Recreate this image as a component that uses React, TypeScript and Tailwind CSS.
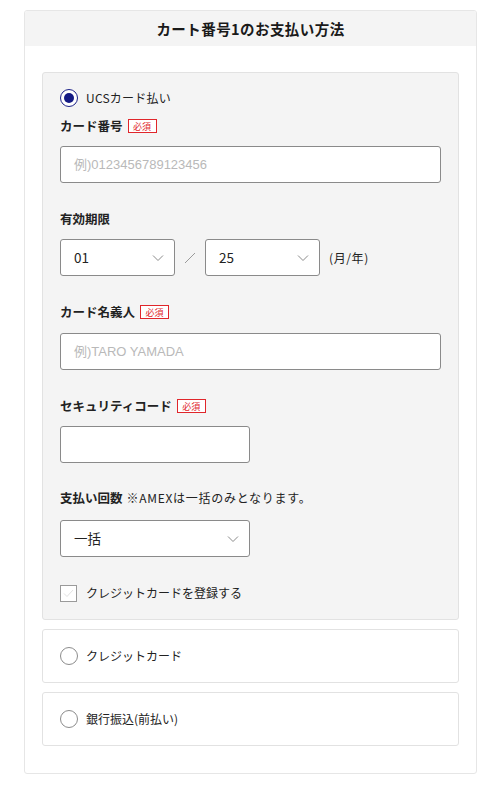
import React from "react";

const jp = { fontFamily: '"Noto Sans CJK JP", "Noto Sans", sans-serif' };

function Badge() {
  return (
    <span className="ml-[5px] inline-flex h-[14px] w-[29px] items-center justify-center border border-[#e0262b] bg-white text-[9px] font-normal leading-none text-[#e0262b]">
      必須
    </span>
  );
}

function Label({ children, required }: { children: React.ReactNode; required?: boolean }) {
  return (
    <div className="flex h-[18px] items-center text-[12.5px] font-bold leading-[18px] text-[#222]">
      <span>{children}</span>
      {required && <Badge />}
    </div>
  );
}

function Chevron() {
  return (
    <svg width="12" height="7" viewBox="0 0 12 7" className="absolute right-[10px] top-1/2 -translate-y-1/2">
      <path d="M1 1 L6 6 L11 1" fill="none" stroke="#8a8a8a" strokeWidth="1" />
    </svg>
  );
}

function Select({ value, width }: { value: string; width: string }) {
  return (
    <div className={`relative flex h-[37px] items-center rounded-[3px] border border-[#8a8a8a] bg-white pl-[13px] text-[13.5px] text-[#222] ${width}`}>
      <span>{value}</span>
      <Chevron />
    </div>
  );
}

function Input({ placeholder, width }: { placeholder?: string; width: string }) {
  return (
    <div className={`flex h-[37px] items-center rounded-[3px] border border-[#8a8a8a] bg-white pl-[13px] ${width}`}>
      {placeholder && (
        <span className="text-[13px] text-[#b9b9b9]" style={{ fontFamily: '"Liberation Sans", "Noto Sans CJK JP", sans-serif' }}>
          {placeholder}
        </span>
      )}
    </div>
  );
}

function Radio({ checked }: { checked?: boolean }) {
  return checked ? (
    <span className="flex h-[18px] w-[18px] items-center justify-center rounded-full border-[1.5px] border-[#1e2388] bg-white">
      <span className="h-[10px] w-[10px] rounded-full bg-[#141a84]" />
    </span>
  ) : (
    <span className="h-[18px] w-[18px] rounded-full border-[1.5px] border-[#8c8c8c] bg-white" />
  );
}

export default function App() {
  return (
    <div className="min-h-[785px] bg-white pt-[10px]" style={jp}>
      <div className="mx-[24px] w-[453px] overflow-hidden rounded-[3px] border-[1.5px] border-[#e6e6e6] bg-white pb-[27px]">
        <div className="flex h-[35px] items-center justify-center bg-[#f4f4f4] text-[14.5px] font-bold tracking-[0.03em] text-[#1a1a1a]">
          カート番号1のお支払い方法
        </div>
        <div className="mx-[17px] mt-[26px] flex flex-col gap-[9px]">
          <div className="rounded-[3px] border-[1.5px] border-[#e2e2e2] bg-[#f4f4f4] px-[17px] pb-[17px] pt-[16px]">
            <div className="flex items-center gap-[8px]">
              <Radio checked />
              <span className="text-[12px] tracking-[0.02em] text-[#222]">UCSカード払い</span>
            </div>
            <div className="mt-[10px]">
              <Label required>カード番号</Label>
            </div>
            <div className="mt-[11px]">
              <Input placeholder="例)0123456789123456" width="w-[381px]" />
            </div>
            <div className="mt-[27px]">
              <Label>有効期限</Label>
            </div>
            <div className="mt-[11px] flex items-center">
              <Select value="01" width="w-[115px]" />
              <span className="flex w-[30px] justify-center">
                <svg width="12" height="12" viewBox="0 0 12 12">
                  <path d="M1 11 L11 1" stroke="#9a9a9a" strokeWidth="1" />
                </svg>
              </span>
              <Select value="25" width="w-[115px]" />
              <span className="ml-[9px] text-[12px] tracking-[0.05em] text-[#222]">(月/年)</span>
            </div>
            <div className="mt-[27px]">
              <Label required>カード名義人</Label>
            </div>
            <div className="mt-[12px]">
              <Input placeholder="例)TARO YAMADA" width="w-[381px]" />
            </div>
            <div className="mt-[27px]">
              <Label required>セキュリティコード</Label>
            </div>
            <div className="mt-[11px]">
              <Input width="w-[190px]" />
            </div>
            <div className="mt-[26px] flex h-[18px] items-center text-[12.5px] text-[#222]">
              <span className="font-bold">支払い回数</span>
              <span className="ml-[4px] text-[12px] tracking-[0.06em]">※AMEXは一括のみとなります。</span>
            </div>
            <div className="mt-[13px]">
              <Select value="一括" width="w-[190px]" />
            </div>
            <div className="mt-[27px] flex items-center gap-[9px]">
              <span className="flex h-[17px] w-[17px] items-center justify-center border border-[#9a9a9a] bg-white">
                <svg width="11" height="9" viewBox="0 0 11 9">
                  <path d="M1 4.5 L4 7.5 L10 1" fill="none" stroke="#e2e2e2" strokeWidth="1" />
                </svg>
              </span>
              <span className="text-[12px] text-[#222]">クレジットカードを登録する</span>
            </div>
          </div>
          <div className="flex h-[54px] items-center gap-[8px] rounded-[3px] border-[1.5px] border-[#e2e2e2] bg-white px-[17px]">
            <Radio />
            <span className="text-[12px] text-[#222]">クレジットカード</span>
          </div>
          <div className="flex h-[54px] items-center gap-[8px] rounded-[3px] border-[1.5px] border-[#e2e2e2] bg-white px-[17px]">
            <Radio />
            <span className="text-[12px] text-[#222]">銀行振込(前払い)</span>
          </div>
        </div>
      </div>
    </div>
  );
}
